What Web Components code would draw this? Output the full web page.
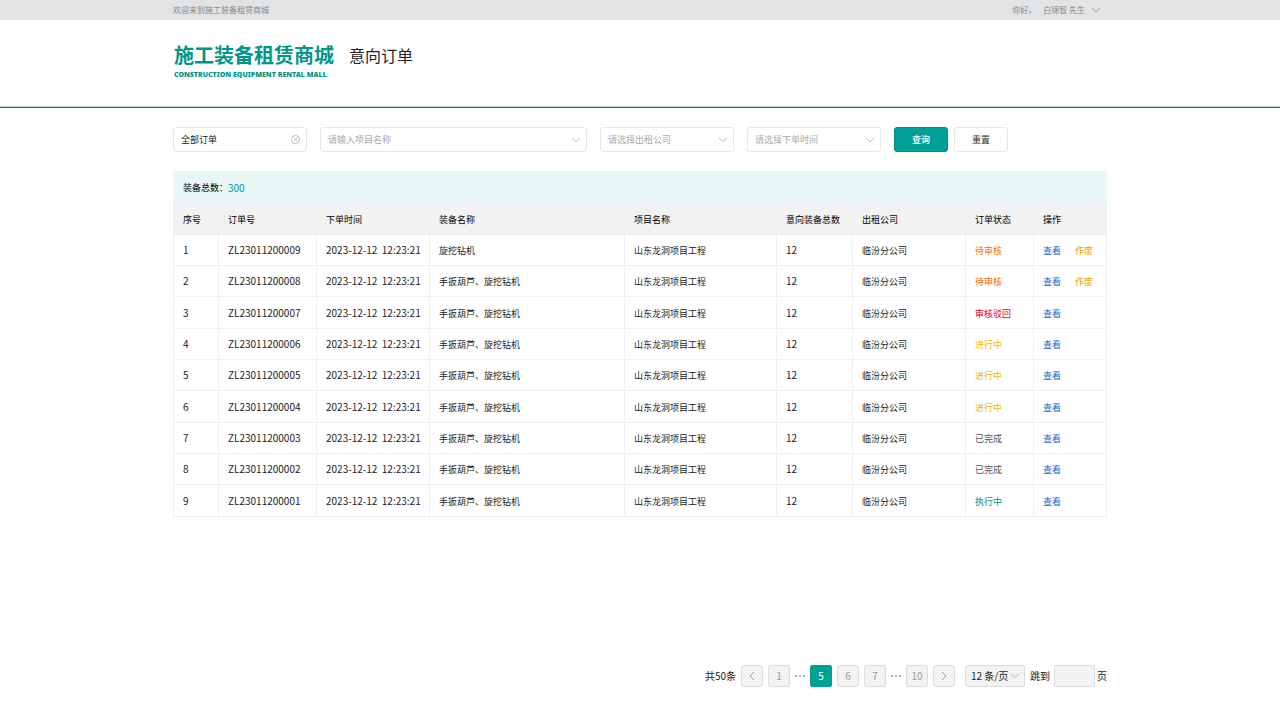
<!DOCTYPE html>
<html lang="zh-CN">
<head>
  <meta charset="UTF-8">
  <meta name="viewport" content="width=device-width, initial-scale=1.0">
  <title>施工装备租赁商城 - 意向订单</title>
  <style>
    :root {
      --brand: #00a096;
      --brand-dark: #009688;
      --line: #f0f0f0;
      --text: #222;
      --muted: #aaa;
      --link: #1468d8;
    }

    body {
      margin: 0;
      min-height: 100vh;
      display: flex;
      flex-direction: column;
      background: #fff;
      color: var(--text);
      font-family: "Noto Sans CJK SC", "Open Sans", sans-serif;
      font-size: 9px;
      line-height: 14px;
    }

    main {
      flex: 1;
      display: flex;
      flex-direction: column;
      gap: 19px;
      box-sizing: border-box;
      width: calc(100% - 48px);
      max-width: 934px;
      margin: 0 auto;
      padding: 19px 0 33px;
    }

    page-nav {
      margin-top: auto;
    }
  </style>
</head>
<body>
  <mall-topbar user="白锦智 先生">欢迎来到施工装备租赁商城</mall-topbar>
  <mall-header>意向订单</mall-header>
  <main>
    <order-filter></order-filter>
    <order-table total="300"></order-table>
    <page-nav></page-nav>
  </main>

  <script>
    const chevron = /*html*/`
      <svg class="chevron" width="10" height="6" viewBox="0 0 10 6" fill="none" stroke="currentColor" stroke-width=".8" aria-hidden="true">
        <path d="M1 1l4 3.7L9 1" />
      </svg>
    `;

    class MallTopbar extends HTMLElement {
      constructor() {
        super();
        this.shadow = this.attachShadow({ mode: 'open' });
      }

      connectedCallback() {
        this.render();
      }

      render() {
        this.shadow.innerHTML = /*html*/`
          <style>
            :host {
              display: block;
              background: #e2e3e5;
              color: #888;
              font-size: 8px;
              line-height: 20px;
            }

            .inner {
              display: flex;
              justify-content: space-between;
              width: calc(100% - 48px);
              max-width: 934px;
              margin: 0 auto;
            }

            .user {
              display: flex;
              gap: 7px;
              padding-right: 6px;
            }

            button {
              display: flex;
              align-items: center;
              gap: 6px;
              padding: 0;
              border: none;
              background: none;
              color: inherit;
              font: inherit;
              cursor: pointer;
            }
          </style>

          <div class="inner">
            <span><slot></slot></span>
            <div class="user">
              <span>你好，</span>
              <button type="button">${this.getAttribute('user')} ${chevron}</button>
            </div>
          </div>
        `;
      }
    }

    class MallHeader extends HTMLElement {
      constructor() {
        super();
        this.shadow = this.attachShadow({ mode: 'open' });
      }

      connectedCallback() {
        this.render();
      }

      render() {
        this.shadow.innerHTML = /*html*/`
          <style>
            :host {
              display: block;
              border-bottom: 1px solid #008074;
              box-shadow: inset 0 -1px #b5dcd8;
            }

            .inner {
              display: flex;
              align-items: flex-start;
              gap: 15px;
              width: calc(100% - 48px);
              max-width: 934px;
              margin: 0 auto;
              padding: 22px 0 25px;
            }

            .logo {
              color: var(--brand-dark);
              text-decoration: none;
              padding-left: 1px;
            }

            .name {
              display: block;
              font-size: 20px;
              font-weight: 700;
              line-height: 26px;
            }

            .english {
              display: block;
              font-family: "Noto Sans", "Open Sans", sans-serif;
              font-size: 7px;
              font-weight: 900;
              line-height: 14px;
              white-space: nowrap;
            }

            h1 {
              margin: 0;
              font-size: 16px;
              font-weight: 400;
              line-height: 26px;
            }
          </style>

          <div class="inner">
            <a class="logo" href="#">
              <span class="name">施工装备租赁商城</span>
              <span class="english">CONSTRUCTION EQUIPMENT RENTAL MALL</span>
            </a>
            <h1><slot></slot></h1>
          </div>
        `;
      }
    }

    class FilterInput extends HTMLElement {
      constructor() {
        super();
        this.shadow = this.attachShadow({ mode: 'open' });
      }

      connectedCallback() {
        this.render();
        this.shadow.querySelector('button').addEventListener('click', () => {
          this.shadow.querySelector('input').value = '';
        });
      }

      render() {
        this.shadow.innerHTML = /*html*/`
          <style>
            :host {
              display: flex;
              align-items: center;
              box-sizing: border-box;
              height: 25px;
              padding: 0 6px 0 7px;
              border: 1px solid #e8e8e8;
              border-radius: 3px;
            }

            input {
              flex: 1;
              min-width: 0;
              padding: 0;
              border: none;
              outline: none;
              background: none;
              color: var(--text);
              font: inherit;
            }

            button {
              display: flex;
              padding: 0;
              border: none;
              background: none;
              color: var(--muted);
              cursor: pointer;
            }
          </style>

          <input type="text" aria-label="${this.getAttribute('label')}" value="${this.getAttribute('value')}">
          <button type="button" aria-label="清空">
            <svg width="9" height="9" viewBox="0 0 9 9" fill="none" stroke="currentColor" stroke-width=".8">
              <circle cx="4.5" cy="4.5" r="4" />
              <path d="M3 3l3 3M6 3L3 6" />
            </svg>
          </button>
        `;
      }
    }

    class FilterSelect extends HTMLElement {
      constructor() {
        super();
        this.shadow = this.attachShadow({ mode: 'open' });
      }

      connectedCallback() {
        this.render();
      }

      render() {
        this.shadow.innerHTML = /*html*/`
          <style>
            :host {
              display: grid;
              align-items: center;
            }

            select, .chevron {
              grid-area: 1 / 1;
            }

            select {
              appearance: none;
              box-sizing: border-box;
              width: 100%;
              height: 25px;
              padding: 0 20px 0 7px;
              border: 1px solid #e8e8e8;
              border-radius: 3px;
              background: #fff;
              color: var(--muted);
              font: inherit;
            }

            .chevron {
              justify-self: end;
              margin-right: 6px;
              color: var(--muted);
              pointer-events: none;
            }
          </style>

          <select aria-label="${this.getAttribute('placeholder')}">
            <option>${this.getAttribute('placeholder')}</option>
          </select>
          ${chevron}
        `;
      }
    }

    class MallButton extends HTMLElement {
      constructor() {
        super();
        this.shadow = this.attachShadow({ mode: 'open' });
      }

      connectedCallback() {
        this.render();
      }

      render() {
        this.shadow.innerHTML = /*html*/`
          <style>
            :host {
              display: block;
            }

            button {
              width: 54px;
              height: 25px;
              padding: 0;
              border: 1px solid #e8e8e8;
              border-radius: 3px;
              background: #fff;
              color: #333;
              font: inherit;
              cursor: pointer;
            }

            :host([primary]) button {
              border-color: #008e84;
              background: var(--brand);
              color: #fff;
              font-weight: 500;
            }
          </style>

          <button type="button"><slot></slot></button>
        `;
      }
    }

    class OrderFilter extends HTMLElement {
      constructor() {
        super();
        this.shadow = this.attachShadow({ mode: 'open' });
      }

      connectedCallback() {
        this.render();
      }

      render() {
        this.shadow.innerHTML = /*html*/`
          <style>
            :host {
              display: flex;
              flex-wrap: wrap;
              gap: 13px;
            }

            filter-input, filter-select {
              width: 134px;
            }

            .wide {
              width: 267px;
            }

            .actions {
              display: flex;
              gap: 6px;
            }
          </style>

          <filter-input label="订单类型" value="全部订单"></filter-input>
          <filter-select class="wide" placeholder="请输入项目名称"></filter-select>
          <filter-select placeholder="请选择出租公司"></filter-select>
          <filter-select placeholder="请选择下单时间"></filter-select>
          <div class="actions">
            <mall-button primary>查询</mall-button>
            <mall-button>重置</mall-button>
          </div>
        `;
      }
    }

    const statuses = [
      ['待审核', 'pending'],
      ['待审核', 'pending'],
      ['审核驳回', 'rejected'],
      ['进行中', 'active'],
      ['进行中', 'active'],
      ['进行中', 'active'],
      ['已完成', 'done'],
      ['已完成', 'done'],
      ['执行中', 'running']
    ];

    class OrderTable extends HTMLElement {
      constructor() {
        super();
        this.shadow = this.attachShadow({ mode: 'open' });
      }

      connectedCallback() {
        this.render();
      }

      row([status, type], i) {
        return /*html*/`
          <tr>
            <td class="num">${i + 1}</td>
            <td class="num">ZL2301120000${9 - i}</td>
            <td class="num">2023-12-12&nbsp; 12:23:21</td>
            <td>${i === 0 ? '旋挖钻机' : '手扳葫芦、旋挖钻机'}</td>
            <td>山东龙洞项目工程</td>
            <td class="num">12</td>
            <td>临汾分公司</td>
            <td class="${type}">${status}</td>
            <td>
              <div class="links">
                <a href="#">查看</a>
                ${type === 'pending' ? '<a class="void" href="#">作废</a>' : ''}
              </div>
            </td>
          </tr>
        `;
      }

      render() {
        this.shadow.innerHTML = /*html*/`
          <style>
            :host {
              display: block;
            }

            .summary {
              display: flex;
              align-items: center;
              box-sizing: border-box;
              height: 32px;
              padding: 2px 0 0 10px;
              background: #e9f6f6;
              color: #000;
            }

            .summary b {
              color: var(--brand);
              font-size: 10px;
              font-weight: 400;
            }

            table {
              width: 100%;
              table-layout: fixed;
              border-collapse: separate;
              border-spacing: 0;
            }

            th, td {
              box-sizing: border-box;
              height: 31px;
              padding: 2px 0 0 9px;
              border-right: 1px solid var(--line);
              border-bottom: 1px solid var(--line);
              text-align: left;
              font-weight: 400;
              white-space: nowrap;
            }

            th {
              height: 32px;
              background: #f2f2f2;
              color: #000;
            }

            tr > :first-child {
              border-left: 1px solid var(--line);
            }

            tbody tr:nth-child(3n) td {
              height: 32px;
            }

            .num {
              padding-top: 0;
              font-size: 10px;
            }

            .pending { color: #ff6c00; }
            .rejected { color: #e60012; }
            .active { color: #f5b800; }
            .done { color: #555; }
            .running { color: var(--brand-dark); }

            .links {
              display: flex;
              gap: 14px;
            }

            a {
              color: var(--link);
              text-decoration: none;
            }

            a.void {
              color: #f59a00;
            }
          </style>

          <div class="summary">装备总数：<b>${this.getAttribute('total')}</b></div>
          <table>
            <colgroup>
              <col style="width: 46px">
              <col style="width: 98px">
              <col style="width: 113px">
              <col style="width: 195px">
              <col style="width: 152px">
              <col style="width: 76px">
              <col style="width: 113px">
              <col style="width: 68px">
              <col style="width: 73px">
            </colgroup>
            <thead>
              <tr>
                <th>序号</th>
                <th>订单号</th>
                <th>下单时间</th>
                <th>装备名称</th>
                <th>项目名称</th>
                <th>意向装备总数</th>
                <th>出租公司</th>
                <th>订单状态</th>
                <th>操作</th>
              </tr>
            </thead>
            <tbody>
              ${statuses.map(this.row).join('')}
            </tbody>
          </table>
        `;
      }
    }

    class PageNav extends HTMLElement {
      constructor() {
        super();
        this.shadow = this.attachShadow({ mode: 'open' });
      }

      connectedCallback() {
        this.render();
      }

      render() {
        const dots = /*html*/`
          <svg width="10" height="2" viewBox="0 0 10 2" fill="#999" aria-hidden="true">
            <circle cx="1" cy="1" r="1" /><circle cx="5" cy="1" r="1" /><circle cx="9" cy="1" r="1" />
          </svg>
        `;

        this.shadow.innerHTML = /*html*/`
          <style>
            :host {
              display: flex;
              align-items: center;
              justify-content: flex-end;
              gap: 5px;
              font-size: 10px;
            }

            button, select, input {
              box-sizing: border-box;
              height: 22px;
              padding: 0;
              border: 1px solid #dcdcdc;
              border-radius: 2px;
              background: #f2f2f2;
              color: #999;
              font: inherit;
            }

            button {
              display: flex;
              align-items: center;
              justify-content: center;
              width: 22px;
              cursor: pointer;
            }

            button[aria-current] {
              border-color: var(--brand);
              background: var(--brand);
              color: #fff;
            }

            .size {
              display: grid;
              align-items: center;
              width: 60px;
              margin-left: 5px;
            }

            select, .chevron {
              grid-area: 1 / 1;
            }

            select {
              appearance: none;
              width: 100%;
              padding-left: 5px;
              color: var(--text);
            }

            .chevron {
              justify-self: end;
              margin-right: 5px;
              color: var(--muted);
              pointer-events: none;
            }

            .jump {
              display: flex;
              align-items: center;
              gap: 4px;
            }

            input {
              width: 41px;
            }

            .unit {
              margin-left: -3px;
            }
          </style>

          <span>共50条</span>
          <button type="button" aria-label="上一页">
            <svg width="6" height="10" viewBox="0 0 6 10" fill="none" stroke="currentColor"><path d="M5 1L1 5l4 4" /></svg>
          </button>
          <button type="button">1</button>
          ${dots}
          <button type="button" aria-current="page">5</button>
          <button type="button">6</button>
          <button type="button">7</button>
          ${dots}
          <button type="button">10</button>
          <button type="button" aria-label="下一页">
            <svg width="6" height="10" viewBox="0 0 6 10" fill="none" stroke="currentColor"><path d="M1 1l4 4-4 4" /></svg>
          </button>
          <div class="size">
            <select aria-label="每页条数"><option>12 条/页</option></select>
            ${chevron}
          </div>
          <label class="jump">跳到 <input type="text"></label>
          <span class="unit">页</span>
        `;
      }
    }

    customElements.define('mall-topbar', MallTopbar);
    customElements.define('mall-header', MallHeader);
    customElements.define('filter-input', FilterInput);
    customElements.define('filter-select', FilterSelect);
    customElements.define('mall-button', MallButton);
    customElements.define('order-filter', OrderFilter);
    customElements.define('order-table', OrderTable);
    customElements.define('page-nav', PageNav);
  </script>
</body>
</html>
